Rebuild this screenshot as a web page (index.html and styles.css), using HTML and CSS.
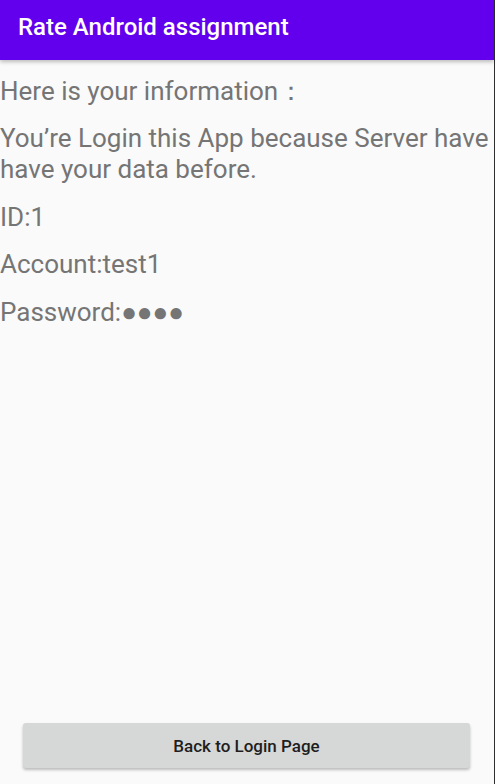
FILE: index.html
```html
<!DOCTYPE html>
<html>
<head>
<meta charset="utf-8">
<link rel="stylesheet" href="styles.css">
</head>
<body>
<div class="screen">
  <header class="appbar">Rate Android assignment</header>
  <main class="content">
    <p class="line">Here is your information：</p>
    <p class="line">You’re Login this App because Server have have your data before.</p>
    <p class="line">ID:1</p>
    <p class="line">Account:test1</p>
    <p class="line">Password:●●●●</p>
  </main>
  <div class="footer">
    <button class="btn">Back to Login Page</button>
  </div>
</div>
</body>
</html>
```
FILE: styles.css
```css
html, body {
  margin: 0;
  padding: 0;
  height: 100%;
  background: #fafafa;
}
.screen {
  height: 784px;
  width: 494px;
  border-right: 1px solid #2e2e2e;
  display: flex;
  flex-direction: column;
  font-family: Roboto, "Noto Sans", sans-serif;
  background: #fafafa;
}
.appbar {
  height: 60px;
  box-sizing: border-box;
  padding-bottom: 6px;
  background: #6200ee;
  color: #fff;
  font-size: 24px;
  font-weight: 500;
  padding-left: 18px;
  display: flex;
  align-items: center;
  box-shadow: 0 2px 4px rgba(0,0,0,0.25);
  position: relative;
  z-index: 1;
}
.content {
  flex: 1;
  padding-top: 15.5px;
}
.line {
  margin: 0 0 16.5px 0;
  color: #757575;
  font-size: 26px;
  line-height: 31px;
}
.footer {
  padding: 0 24px 16px 23px;
}
.btn {
  width: 100%;
  height: 45px;
  border: none;
  border-radius: 3px;
  background: #d6d7d7;
  color: #1e1e1e;
  font-family: Roboto, sans-serif;
  font-size: 17px;
  font-weight: 500;
  box-shadow: 0 2px 3px rgba(0,0,0,0.25);
}
```
